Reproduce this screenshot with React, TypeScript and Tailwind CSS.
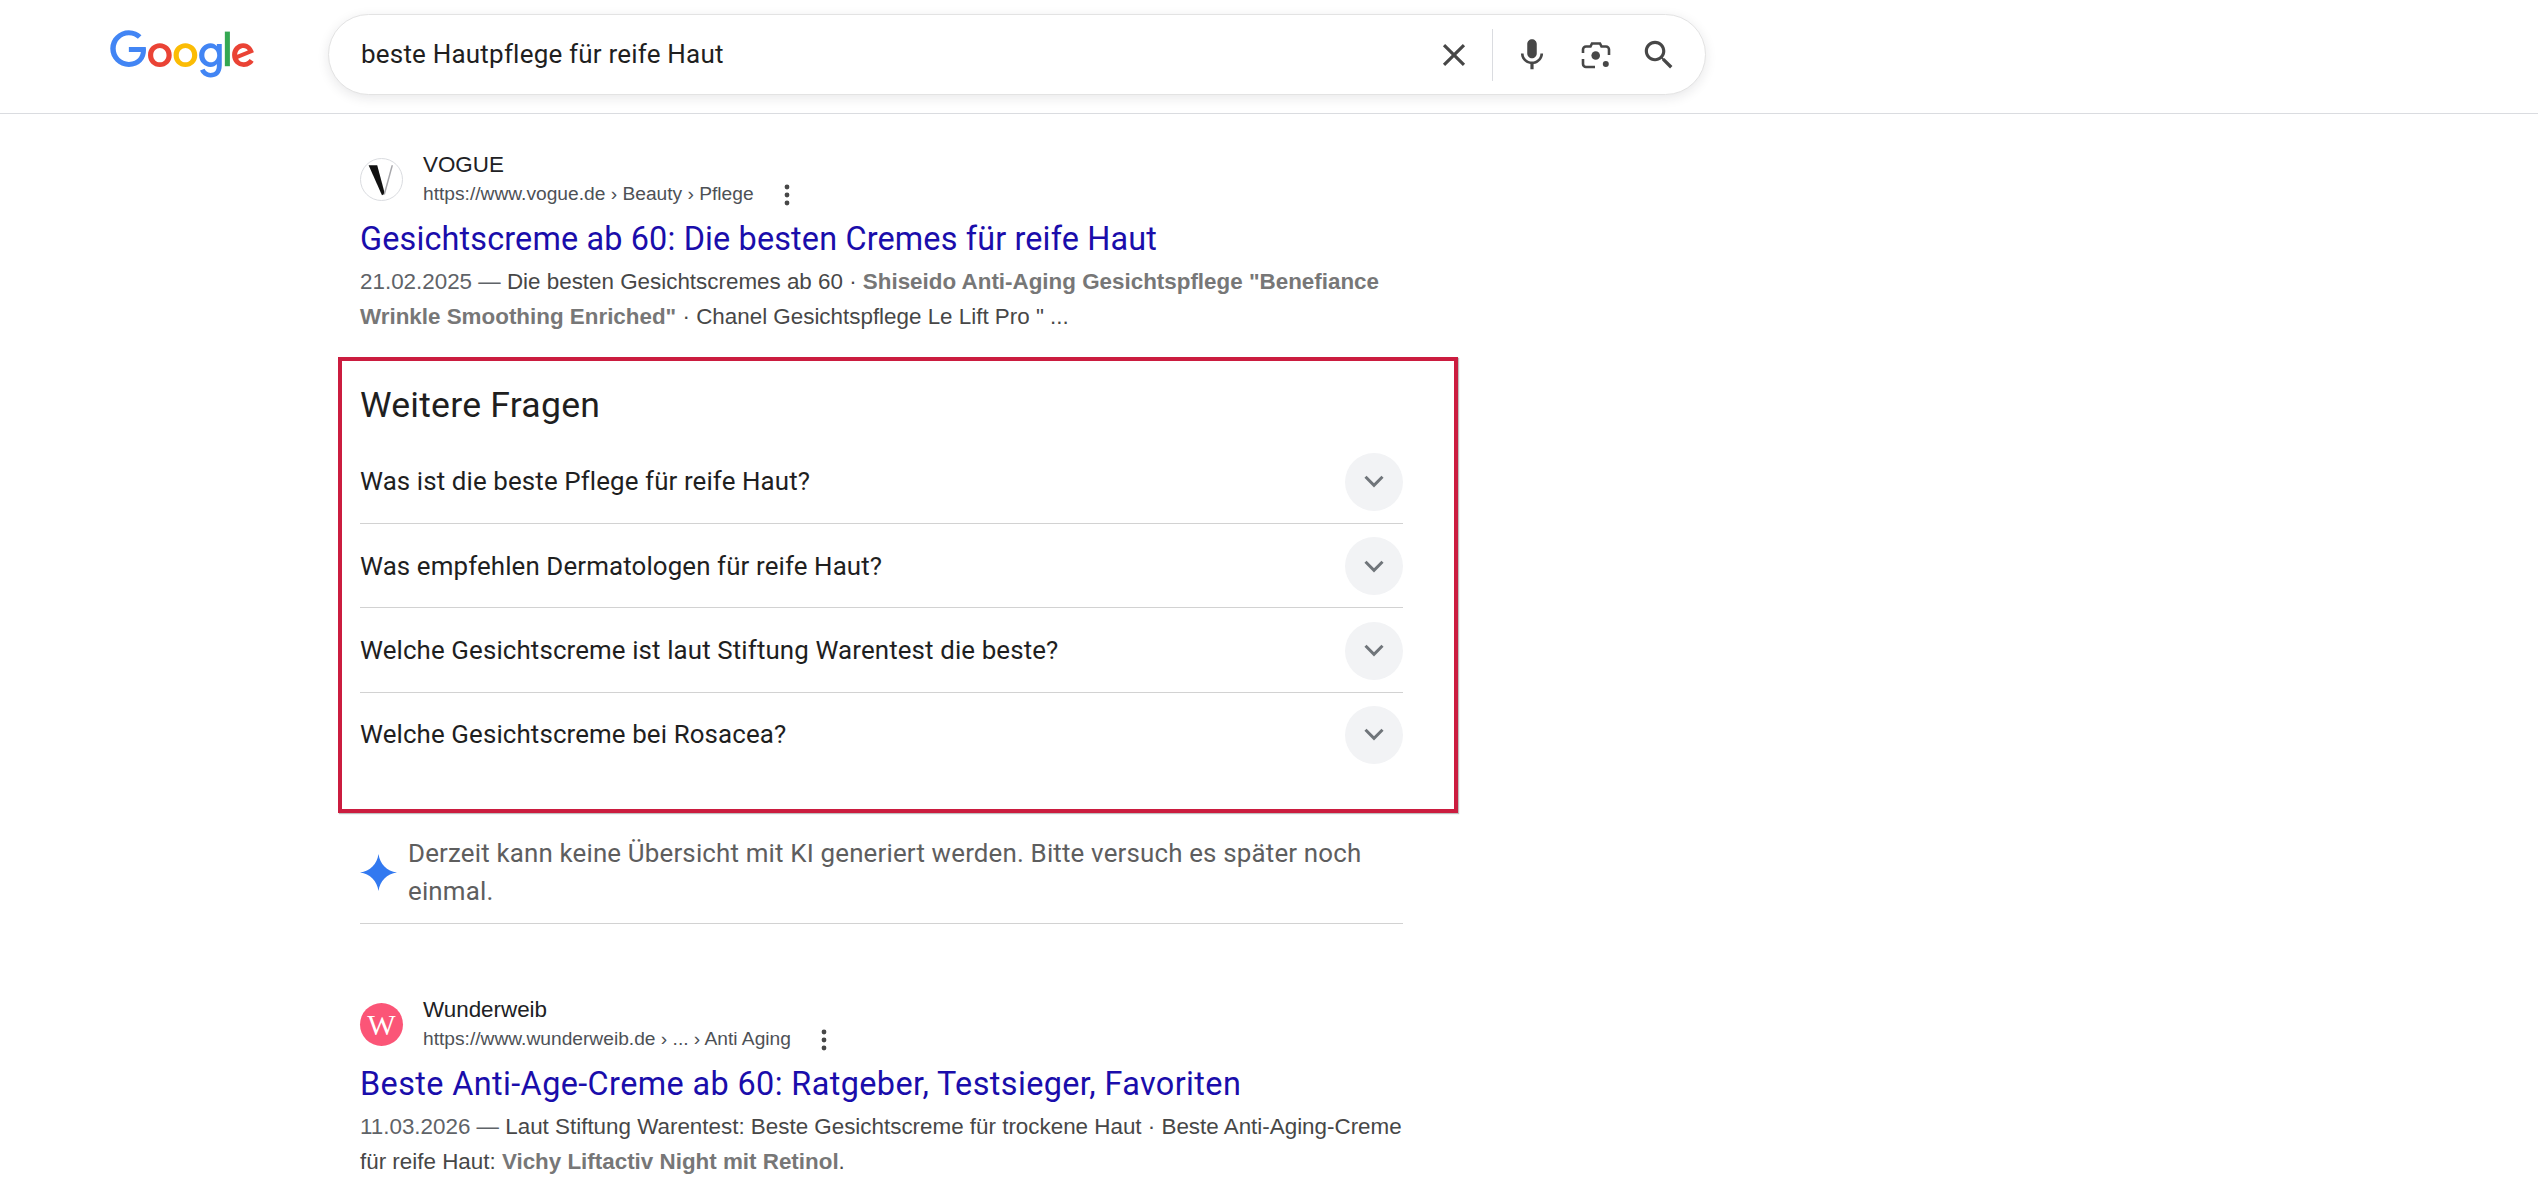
import { ReactNode } from "react";

const questions = [
  "Was ist die beste Pflege für reife Haut?",
  "Was empfehlen Dermatologen für reife Haut?",
  "Welche Gesichtscreme ist laut Stiftung Warentest die beste?",
  "Welche Gesichtscreme bei Rosacea?",
];

function GoogleLogo() {
  return (
    <svg viewBox="0 0 272 92" className="w-[145px] h-[49px] shrink-0">
      <path fill="#EA4335" d="M115.75 47.18c0 12.77-9.99 22.18-22.25 22.18s-22.25-9.41-22.25-22.18C71.25 34.32 81.24 25 93.5 25s22.25 9.32 22.25 22.18zm-9.74 0c0-7.98-5.79-13.44-12.51-13.44S80.99 39.2 80.99 47.18c0 7.9 5.79 13.44 12.51 13.44s12.51-5.55 12.51-13.44z" />
      <path fill="#FBBC05" d="M163.75 47.18c0 12.77-9.99 22.18-22.25 22.18s-22.25-9.41-22.25-22.18c0-12.85 9.99-22.18 22.25-22.18s22.25 9.32 22.25 22.18zm-9.74 0c0-7.98-5.79-13.44-12.51-13.44s-12.51 5.46-12.51 13.44c0 7.9 5.79 13.44 12.51 13.44s12.51-5.55 12.51-13.44z" />
      <path fill="#4285F4" d="M209.75 26.34v39.82c0 16.38-9.66 23.07-21.08 23.07-10.75 0-17.22-7.19-19.66-13.07l8.48-3.53c1.51 3.61 5.21 7.87 11.17 7.87 7.31 0 11.84-4.51 11.84-13v-3.19h-.34c-2.18 2.69-6.38 5.04-11.68 5.04-11.09 0-21.25-9.66-21.25-22.09 0-12.52 10.16-22.26 21.25-22.26 5.29 0 9.49 2.35 11.68 4.96h.34v-3.61h9.25zm-8.56 20.92c0-7.81-5.21-13.52-11.84-13.52-6.72 0-12.35 5.71-12.35 13.52 0 7.73 5.63 13.36 12.35 13.36 6.63 0 11.84-5.63 11.84-13.36z" />
      <path fill="#34A853" d="M225 3v65h-9.5V3h9.5z" />
      <path fill="#EA4335" d="M262.02 54.48l7.56 5.04c-2.44 3.61-8.32 9.83-18.48 9.83-12.6 0-22.01-9.74-22.01-22.18 0-13.19 9.49-22.18 20.92-22.18 11.51 0 17.14 9.16 18.98 14.11l1.01 2.52-29.65 12.28c2.27 4.45 5.8 6.72 10.75 6.72 4.96 0 8.4-2.44 10.92-6.14zm-23.27-7.98l19.82-8.23c-1.09-2.77-4.37-4.7-8.23-4.7-4.95 0-11.84 4.37-11.59 12.93z" />
      <path fill="#4285F4" d="M35.29 41.41V32H67c.31 1.64.47 3.58.47 5.68 0 7.06-1.93 15.79-8.15 22.01-6.05 6.3-13.78 9.66-24.02 9.66C16.32 69.35.36 53.89.36 34.91.36 15.93 16.32.47 35.3.47c10.5 0 17.98 4.12 23.6 9.49l-6.64 6.64c-4.03-3.78-9.49-6.72-16.97-6.72-13.86 0-24.7 11.17-24.7 25.03 0 13.86 10.84 25.03 24.7 25.03 8.99 0 14.11-3.61 17.39-6.89 2.66-2.66 4.41-6.46 5.1-11.65l-22.49.01z" />
    </svg>
  );
}

function SearchBar() {
  return (
    <div className="ml-[73px] w-[1378px] h-[81px] pr-[27px] flex items-center rounded-full bg-white border border-[#e3e3e3] shadow-[0_3px_12px_rgba(32,33,36,0.1)]">
      <div className="flex-1 pl-[32px] text-[26px] tracking-[0.2px] text-[#1f1f1f] font-['Roboto',sans-serif]">beste Hautpflege für reife Haut</div>
      <svg viewBox="0 0 24 24" className="w-[38px] h-[38px] fill-[#474747] mr-[19px]">
        <path d="M19 6.41 17.59 5 12 10.59 6.41 5 5 6.41 10.59 12 5 17.59 6.41 19 12 13.41 17.59 19 19 17.59 13.41 12z" />
      </svg>
      <div className="w-px h-[52px] bg-[#dadce0]" />
      <svg viewBox="0 0 24 24" className="w-[38px] h-[38px] fill-[#474747] ml-[20px]">
        <path d="M12 14c1.66 0 3-1.34 3-3V5c0-1.66-1.34-3-3-3S9 3.34 9 5v6c0 1.66 1.34 3 3 3zM17.3 11c0 3-2.54 5.1-5.3 5.1S6.7 14 6.7 11H5c0 3.41 2.72 6.23 6 6.72V21h2v-3.28c3.28-.48 6-3.3 6-6.72h-1.7z" />
      </svg>
      <svg viewBox="0 0 30 30" className="w-[30px] h-[30px] ml-[30px]">
        <path d="M2 13V9.5a3 3 0 0 1 3-3h4.5L11 3.5h8l1.5 3H25a3 3 0 0 1 3 3V15M2 19v5a3 3 0 0 0 3 3h9" fill="none" stroke="#474747" strokeWidth="2.6" />
        <circle cx="14.7" cy="15.5" r="4.3" fill="#474747" />
        <circle cx="24.8" cy="24" r="3" fill="#474747" />
      </svg>
      <svg viewBox="0 0 24 24" className="w-[38px] h-[38px] fill-[#474747] ml-[29px]">
        <path d="M15.5 14h-.79l-.28-.27C15.41 12.59 16 11.11 16 9.5 16 5.91 13.09 3 9.5 3S3 5.91 3 9.5 5.91 16 9.5 16c1.61 0 3.09-.59 4.23-1.57l.27.28v.79l5 4.99L20.49 19l-4.99-5zm-6 0C7.01 14 5 11.99 5 9.5S7.01 5 9.5 5 14 7.01 14 9.5 11.99 14 9.5 14z" />
      </svg>
    </div>
  );
}

function MoreDots() {
  return (
    <svg viewBox="0 0 6 22" className="w-[6px] h-[22px] fill-[#474747] ml-[30px]">
      <circle cx="3" cy="3" r="2.4" />
      <circle cx="3" cy="11" r="2.4" />
      <circle cx="3" cy="19" r="2.4" />
    </svg>
  );
}

function VogueIcon() {
  return (
    <div className="w-[43px] h-[43px] mt-[6px] shrink-0 rounded-full border border-[#dadce0] bg-white flex items-center justify-center">
      <svg viewBox="0 0 43 43" className="w-[41px] h-[41px]">
        <path d="M8 6.5h9l8 30-3 1.5z" fill="#111" />
        <path d="M24 36 32 6.5h1.6L25 38z" fill="#a8a8ac" />
      </svg>
    </div>
  );
}

function WunderweibIcon() {
  return (
    <div className="w-[43px] h-[43px] mt-[6px] shrink-0 rounded-full bg-[#fb5577] flex items-center justify-center text-white text-[30px] leading-none font-['Liberation_Serif',serif]">
      W
    </div>
  );
}

function Result({ icon, site, url, title, titleClass, children }: { icon: ReactNode; site: string; url: string; title: string; titleClass: string; children: ReactNode }) {
  return (
    <div>
      <div className="flex gap-[20px]">
        {icon}
        <div>
          <div className="h-[26px] leading-[26px] text-[22.4px] text-[#202124] font-['Liberation_Sans',sans-serif]">{site}</div>
          <div className="h-[33px] flex items-center text-[19.2px] text-[#4d5156] font-['Liberation_Sans',sans-serif]">
            {url}
            <MoreDots />
          </div>
        </div>
      </div>
      <div className={`mt-[7px] h-[42px] leading-[42px] text-[32.4px] text-[#1a0dab] font-['Roboto',sans-serif] ${titleClass}`}>{title}</div>
      <div className="mt-[4px] w-[1043px] leading-[35px] text-[22.4px] text-[#474747] font-['Liberation_Sans',sans-serif]">{children}</div>
    </div>
  );
}

function Chevron() {
  return (
    <div className="w-[58px] h-[58px] rounded-full bg-[#f2f3f5] flex items-center justify-center shrink-0">
      <svg viewBox="0 0 20 13" className="w-[20px] h-[13px]">
        <path d="M1.5 1.8 10 10.3l8.5-8.5" fill="none" stroke="#70757a" strokeWidth="3" />
      </svg>
    </div>
  );
}

export default function App() {
  return (
    <div className="w-full h-screen overflow-hidden bg-white">
      <header className="h-[114px] border-b border-[#dadce0] pt-[14px] pl-[110px] flex items-start">
        <div className="h-[81px] flex items-center">
          <GoogleLogo />
        </div>
        <SearchBar />
      </header>

      <main className="pl-[360px] pt-[38px] w-[1403px] box-content">
        <Result
          icon={<VogueIcon />}
          site="VOGUE"
          url="https://www.vogue.de › Beauty › Pflege"
          title="Gesichtscreme ab 60: Die besten Cremes für reife Haut"
          titleClass="tracking-[0.15px]"
        >
          <span className="text-[#5f6368]">21.02.2025 — </span>Die besten Gesichtscremes ab 60 · <b className="text-[#777777]">Shiseido Anti-Aging Gesichtspflege "Benefiance Wrinkle Smoothing Enriched"</b> · Chanel Gesichtspflege Le Lift Pro " ...
        </Result>

        {/* Weitere Fragen */}
        <section className="mt-[23px] -ml-[22px] w-[1120px] border-[4px] border-[#cb1c3f] pl-[18px] pr-[51px] pb-[32px] shadow-[1px_1px_1px_rgba(0,0,0,0.25)]">
          <h2 className="h-[78px] pt-[22px] leading-[44px] text-[35.6px] tracking-[0.23px] text-[#1f1f1f] font-['Roboto',sans-serif]">Weitere Fragen</h2>
          {questions.map((q, i) => (
            <div key={q} className={`h-[84.5px] flex items-center justify-between ${i < 3 ? "pt-[2px] border-b-[1.5px] border-[#d2d2d2]" : ""}`}>
              <span className="text-[25.9px] tracking-[0.11px] text-[#1f1f1f] font-['Roboto',sans-serif]">{q}</span>
              <Chevron />
            </div>
          ))}
        </section>

        {/* KI Hinweis */}
        <div className="mt-[21px] w-[1043px] pb-[13px] border-b-[1.5px] border-[#d2d2d2] flex items-center gap-[11px]">
          <svg viewBox="0 0 36 36" className="w-[37px] h-[37px] shrink-0">
            <path d="M18 0C19.5 10 26 16.5 36 18 26 19.5 19.5 26 18 36 16.5 26 10 19.5 0 18 10 16.5 16.5 10 18 0Z" fill="#3279f0" />
          </svg>
          <p className="leading-[38px] text-[25.9px] tracking-[0.17px] text-[#5e5e5e] font-['Roboto',sans-serif]">
            Derzeit kann keine Übersicht mit KI generiert werden. Bitte versuch es später noch einmal.
          </p>
        </div>

        <div className="mt-[73px]">
          <Result
            icon={<WunderweibIcon />}
            site="Wunderweib"
            url="https://www.wunderweib.de › ... › Anti Aging"
            title="Beste Anti-Age-Creme ab 60: Ratgeber, Testsieger, Favoriten"
            titleClass="tracking-[0.39px]"
          >
            <span className="text-[#5f6368]">11.03.2026 — </span>Laut Stiftung Warentest: Beste Gesichtscreme für trockene Haut · Beste Anti-Aging-Creme für reife Haut: <b className="text-[#777777]">Vichy Liftactiv Night mit Retinol</b>.
          </Result>
        </div>
      </main>
    </div>
  );
}
